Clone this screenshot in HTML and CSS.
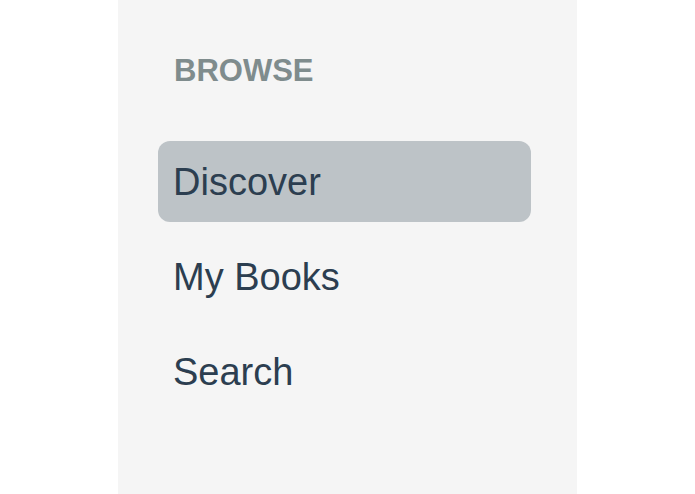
FILE: index.html
```html
<!DOCTYPE HTML>
<html lang="en">
<head>
  <meta name="viewport" content="width=device-width, initial-scale=1">
  <title>Browse</title>
  <link rel="stylesheet" href="styles.css">
</head>
<body>
  <nav class="sidebar">
    <h4 class="sidebar-title">BROWSE</h4>
    <ul class="nav-list">
      <li><a class="nav-item active" href="#">Discover</a></li>
      <li><a class="nav-item" href="#">My Books</a></li>
      <li><a class="nav-item" href="#">Search</a></li>
    </ul>
  </nav>
</body>
</html>
```

FILE: styles.css
```css
/* Global Styles */
:root {
  --page-bg: #ffffff;
  --sidebar-bg: #f5f5f5;
  --active-bg: #bdc3c7;
  --text-color: #2c3e50;
  --muted-color: #7f8c8d;
}

body {
  background-color: var(--page-bg);
  font-family: 'Liberation Sans', Arial, sans-serif;
  margin: 0;
  padding: 0;
}

/* Sidebar */
.sidebar {
  background-color: var(--sidebar-bg);
  margin-left: 118px;
  width: 459px;
  height: 494px;
  box-sizing: border-box;
  padding: 53px 46px 0 40px;
}

.sidebar-title {
  color: var(--muted-color);
  font-size: 31px;
  font-weight: bold;
  line-height: 36px;
  margin: 0 0 52px 16px;
}

.nav-list {
  list-style: none;
  margin: 0;
  padding: 0;
  display: flex;
  flex-direction: column;
  gap: 14px;
}

.nav-item {
  display: block;
  height: 79px;
  line-height: 79px;
  padding: 2px 15px 0;
  border-radius: 12px;
  color: var(--text-color);
  font-size: 38px;
  text-decoration: none;
}

.nav-item.active {
  background-color: var(--active-bg);
}
```
